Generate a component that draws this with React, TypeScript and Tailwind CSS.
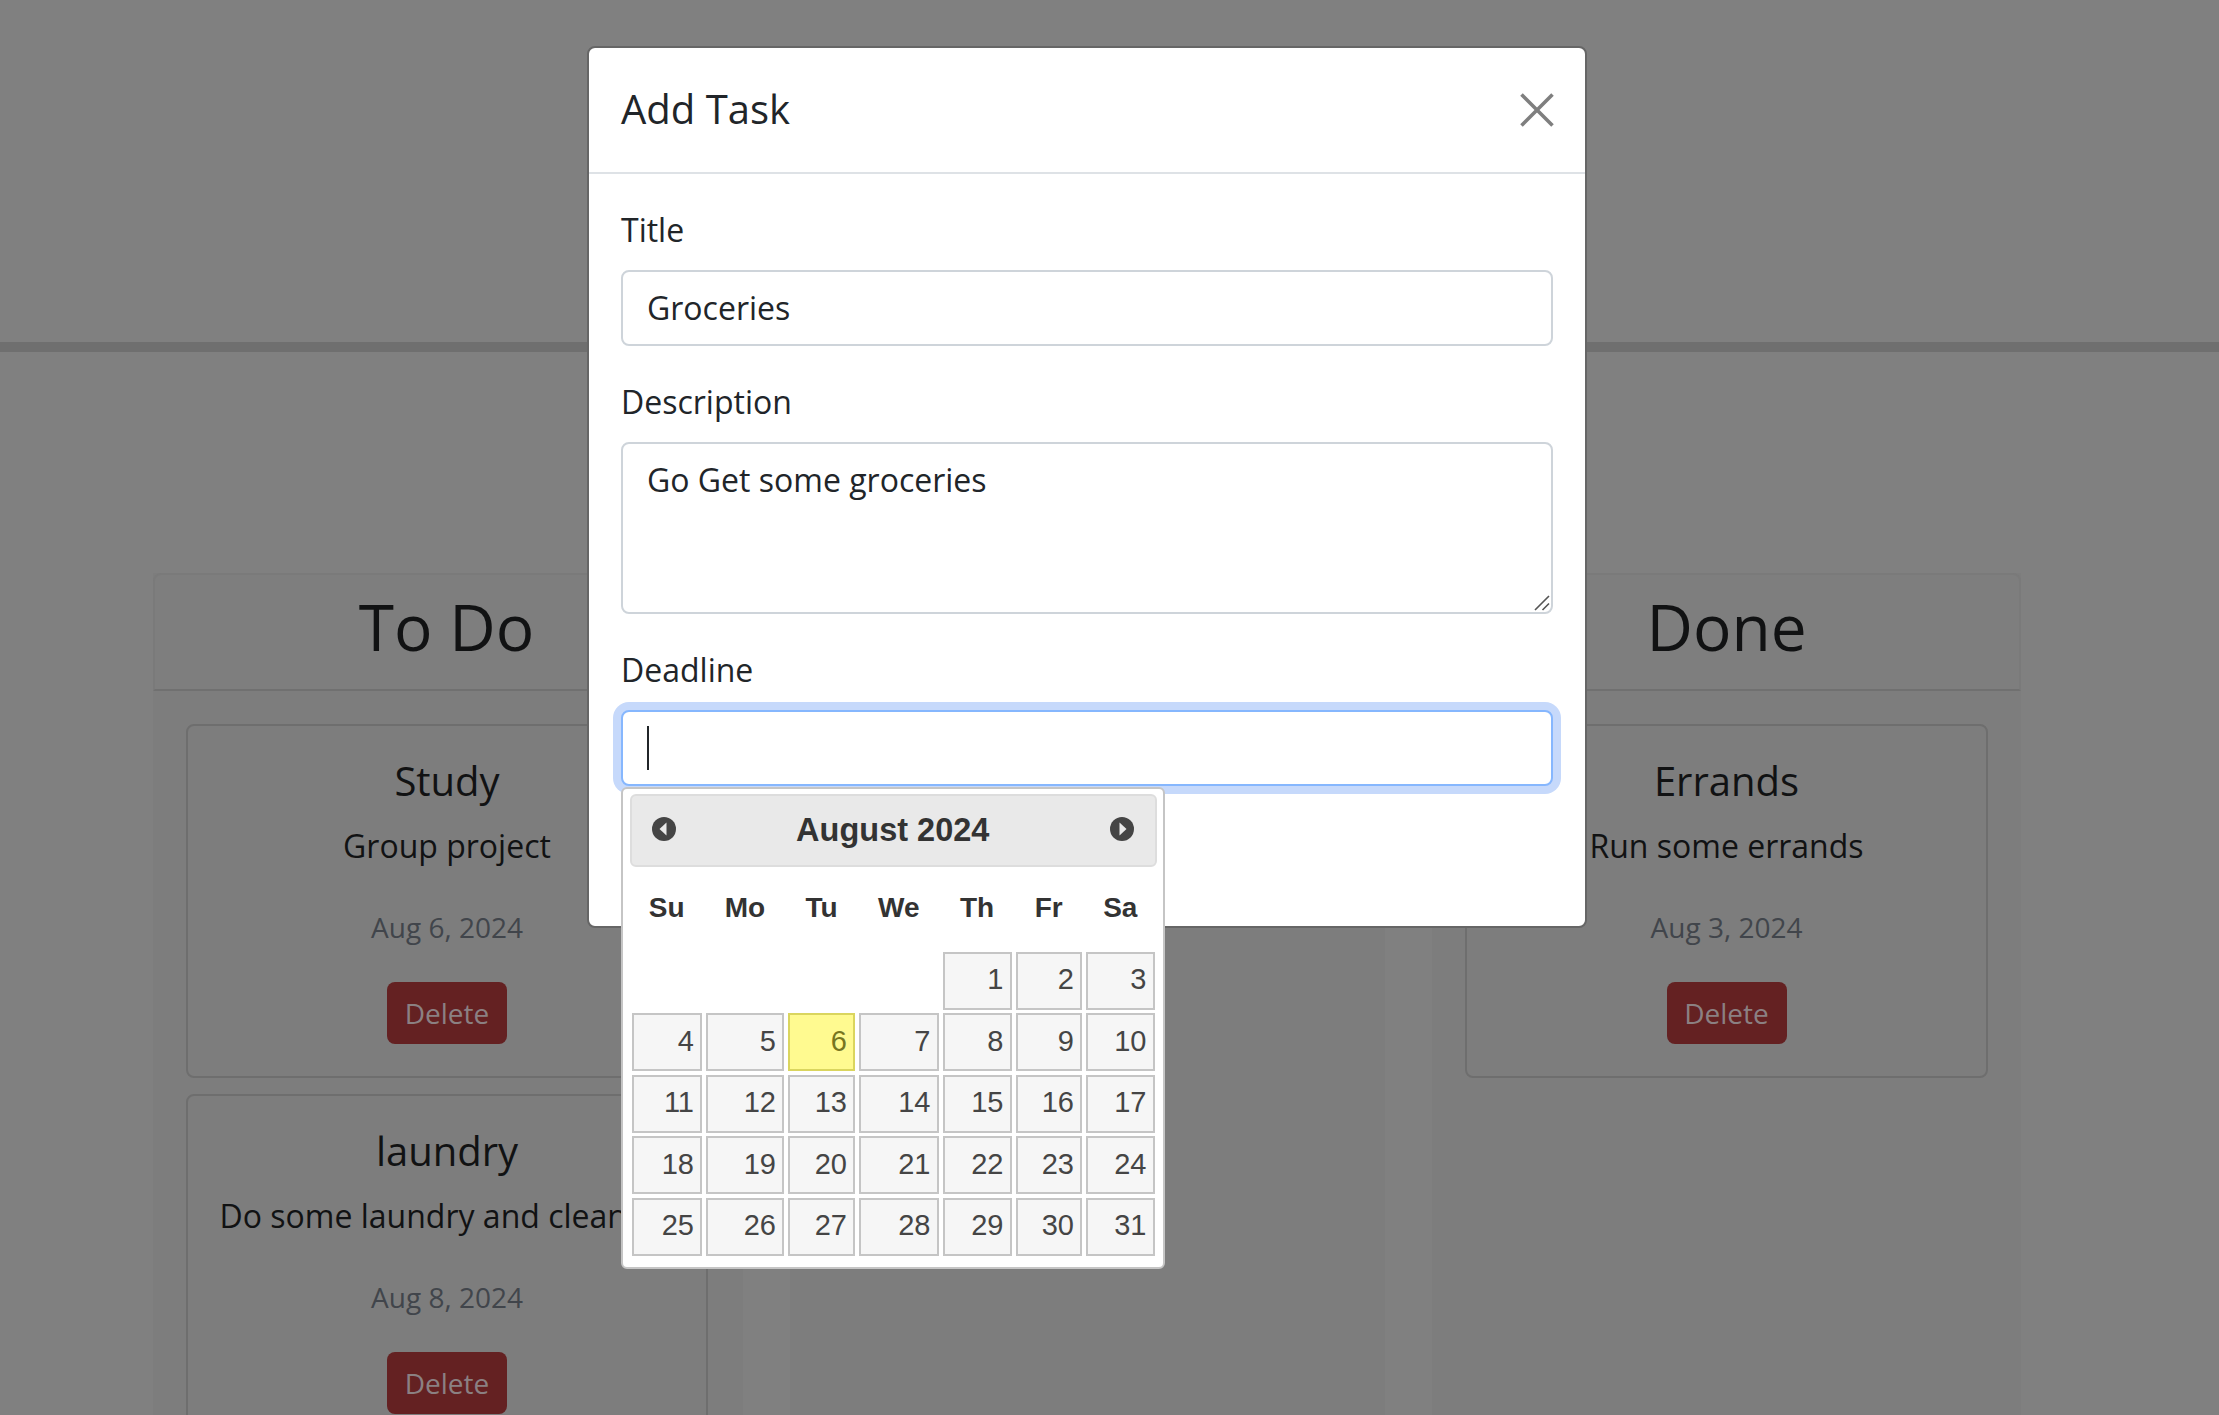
import React from "react";

const font = { fontFamily: '"Open Sans", sans-serif' };

function TaskCard({ title, desc, date }: { title: string; desc: string; date: string }) {
  return (
    <div className="mb-[16px] flex h-[354px] shrink-0 flex-col items-center rounded-lg border-2 border-[#6e6e6e] pt-[31px]">
      <h5 className="text-[40px] leading-[48px] text-[#111213]">{title}</h5>
      <p className="mt-[17px] whitespace-nowrap text-[32px] leading-[48px] text-[#111213]">{desc}</p>
      <p className="mt-[36px] text-[28px] leading-[42px] text-[#41454b]">{date}</p>
      <button className="mt-[34px] h-[62px] w-[120px] rounded-lg bg-[#642122] text-[28px] leading-[42px] text-[#8b8082]">Delete</button>
    </div>
  );
}

function Column({ title, width, inner, children }: { title?: string; width: string; inner: string; children?: React.ReactNode }) {
  return (
    <section className={`${width} flex shrink-0 flex-col bg-[#7d7d7d]`}>
      <div className={`flex h-[118px] shrink-0 items-center justify-center rounded-t-lg border-x-2 border-t-2 border-b-2 border-x-[#7a7a7a] border-t-[#7a7a7a] border-b-[#707070] bg-[#7e7e7e] pb-[10px] text-[64px] leading-[76px] text-[#111213] ${inner}`}>
        {title}
      </div>
      <div className={`flex flex-col pl-[33px] pt-[33px] ${inner === "pr-[3px]" ? "pr-[35px]" : "pr-[33px]"}`}>{children}</div>
    </section>
  );
}

const weeks: (number | null)[][] = [
  [null, null, null, null, 1, 2, 3],
  [4, 5, 6, 7, 8, 9, 10],
  [11, 12, 13, 14, 15, 16, 17],
  [18, 19, 20, 21, 22, 23, 24],
  [25, 26, 27, 28, 29, 30, 31],
];

function Arrow({ dir }: { dir: "left" | "right" }) {
  return (
    <svg width="26" height="26" viewBox="0 0 26 26" className="mt-[-3px] shrink-0 blur-[0.5px]">
      <circle cx="13" cy="13" r="12" fill="#454545" />
      {dir === "left" ? <path d="M15.5 6.5v13L8.5 13z" fill="#e9e9e9" /> : <path d="M10.5 6.5v13L17.5 13z" fill="#e9e9e9" />}
    </svg>
  );
}

function DatePicker() {
  return (
    <div
      className="absolute left-[32px] top-[739px] z-10 h-[482px] w-[544px] rounded-md border-2 border-[#c5c5c5] bg-white pl-[6.5px] pr-[6px] pt-[5px] text-[#333333]"
      style={{ fontFamily: '"Liberation Sans", Arial, sans-serif' }}
    >
      <div className="flex h-[73px] items-center justify-between rounded-md border-2 border-[#dddddd] bg-[#e9e9e9] pl-[19px] pr-[20px]">
        <Arrow dir="left" />
        <span className="text-[32.5px] font-bold leading-none text-[#333333]">August 2024</span>
        <Arrow dir="right" />
      </div>
      <div className="grid grid-cols-[70.5px_78px_67px_79.5px_69px_66.5px_68.5px] gap-x-1 gap-y-[3.5px] pl-[2px]">
        {["Su", "Mo", "Tu", "We", "Th", "Fr", "Sa"].map((d) => (
          <div key={d} className="flex h-[81px] items-center justify-center text-[28px] font-bold leading-none text-[#333333]">
            {d}
          </div>
        ))}
        {weeks.flat().map((d, i) =>
          d === null ? (
            <div key={i} className="h-[58px]" />
          ) : (
            <div
              key={i}
              className={`flex h-[58px] items-center justify-end border-2 pb-[2px] pr-[6px] text-[29px] leading-none ${
                d === 6 ? "border-[#dad55e] bg-[#fffa90] text-[#777620]" : "border-[#c5c5c5] bg-[#f6f6f6] text-[#454545]"
              }`}
            >
              {d}
            </div>
          )
        )}
      </div>
    </div>
  );
}

function Label({ children }: { children: React.ReactNode }) {
  return <label className="mb-[16px] block text-[32px] leading-[48px] text-[#212529]">{children}</label>;
}

function Modal() {
  return (
    <div className="relative h-[882px] w-[1000px] rounded-lg border-2 border-[#666666] bg-white">
      <div className="flex h-[126px] items-center justify-between border-b-2 border-[#dee2e6] px-[32px]">
        <h5 className="pb-[2px] text-[40px] leading-[60px] text-[#212529]">Add Task</h5>
        <svg width="34" height="34" viewBox="0 0 34 34" fill="none" stroke="#7f7f7f" strokeWidth="3.6" className="mr-[-1px]">
          <path d="M1.5 1.5l31 31M32.5 1.5l-31 31" />
        </svg>
      </div>
      <div className="px-[32px] pt-[32px]">
        <Label>Title</Label>
        <input
          readOnly
          value="Groceries"
          className="mb-[32px] block h-[76px] w-full rounded-lg border-2 border-[#ced4da] bg-white px-[24px] pb-[1px] text-[32px] text-[#212529] outline-none"
        />
        <Label>Description</Label>
        <div className="relative mb-[32px] h-[172px]">
          <textarea
            readOnly
            value="Go Get some groceries"
            className="block h-full w-full resize-none rounded-lg border-2 border-[#ced4da] bg-white px-[24px] py-[12px] text-[32px] leading-[48px] text-[#212529] outline-none"
          />
          <svg width="16" height="16" viewBox="0 0 16 16" stroke="#555555" strokeWidth="1.6" className="absolute bottom-[3px] right-[3px]">
            <path d="M1 15L15 1M8.5 15L15 8.5" />
          </svg>
        </div>
        <Label>Deadline</Label>
        <div className="relative h-[76px] rounded-lg border-2 border-[#86b7fe] bg-white shadow-[0_0_0_8px_#c6d9fb]">
          <span className="absolute left-[24px] top-[14px] h-[44px] w-[2px] bg-[#212529]" />
        </div>
      </div>
      <DatePicker />
    </div>
  );
}

export default function App() {
  return (
    <div className="relative h-[1415px] w-full overflow-hidden bg-[#808080]" style={font}>
      <div className="h-[352px] border-b-[10px] border-[#6f6f6f]" />
      <div className="flex gap-[47px] pl-[153px] pt-[221px]">
        <Column title="To Do" width="w-[590px]" inner="pr-[3px]">
          <TaskCard title="Study" desc="Group project" date="Aug 6, 2024" />
          <TaskCard title="laundry" desc="Do some laundry and clean up" date="Aug 8, 2024" />
        </Column>
        <Column width="w-[595px]" inner="" />
        <Column title="Done" width="w-[589px]" inner="">
          <TaskCard title="Errands" desc="Run some errands" date="Aug 3, 2024" />
        </Column>
      </div>
      <div className="absolute inset-0 pl-[587px] pt-[46px]">
        <Modal />
      </div>
    </div>
  );
}
